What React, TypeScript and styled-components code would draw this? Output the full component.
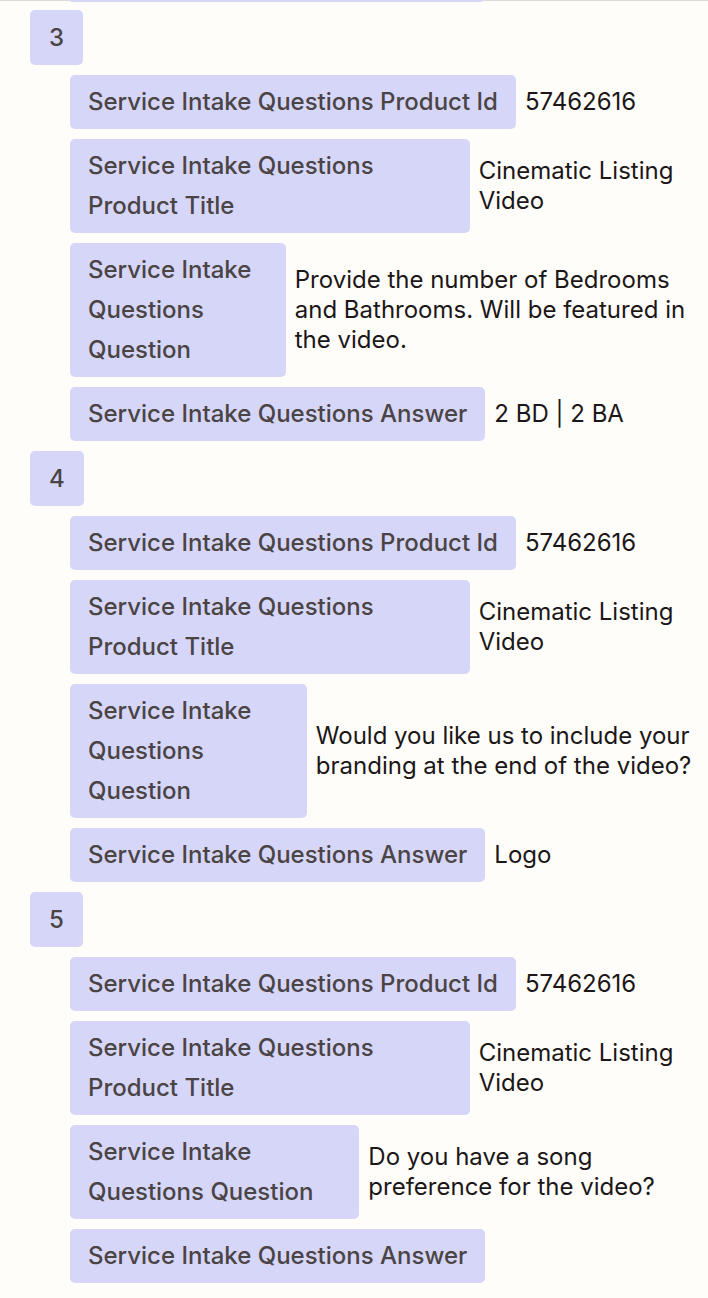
import React from "react";
import styled, { createGlobalStyle } from "styled-components";

const GlobalStyle = createGlobalStyle`
  html, body {
    margin: 0;
    padding: 0;
    background: #fffdf9;
  }
  body {
    font-family: Inter, "Noto Sans", sans-serif;
    -webkit-font-smoothing: antialiased;
  }
`;

const Page = styled.div`
  display: flex;
  flex-direction: column;
  gap: 10px;
  padding: 0 8px 16px 30px;
  border-top: 1px solid #dedcda;
`;

const PrevTail = styled.div`
  margin: -1px 0 -2px 40px;
  width: 413px;
  height: 2px;
  background: #d6d6f9;
  border-radius: 0 0 4px 4px;
`;

const Section = styled.div`
  display: flex;
  flex-direction: column;
  gap: 10px;
`;

const Chip = styled.div`
  background: #d6d6f9;
  color: #4a4445;
  border-radius: 5px;
  padding: 7px 18px;
  font-size: 24px;
  font-weight: 500;
  line-height: 40px;
`;

const Badge = styled(Chip)`
  align-self: flex-start;
  padding: 7.5px 19px;
`;

const Fields = styled.div`
  display: flex;
  flex-direction: column;
  gap: 10px;
  padding-left: 40px;
`;

const Row = styled.div`
  display: flex;
  align-items: center;
  gap: 9px;
`;

const Label = styled(Chip)`
  flex: 0 1 auto;
`;

const Value = styled.div`
  flex: 0 1 auto;
  color: #1b1718;
  font-size: 24px;
  line-height: 30px;
`;

type Item = { n: number; fields: [string, string][] };

const items: Item[] = [
  {
    n: 3,
    fields: [
      ["Service Intake Questions Product Id", "57462616"],
      ["Service Intake Questions Product Title", "Cinematic Listing Video"],
      [
        "Service Intake Questions Question",
        "Provide the number of Bedrooms and Bathrooms. Will be featured in the video.",
      ],
      ["Service Intake Questions Answer", "2 BD | 2 BA"],
    ],
  },
  {
    n: 4,
    fields: [
      ["Service Intake Questions Product Id", "57462616"],
      ["Service Intake Questions Product Title", "Cinematic Listing Video"],
      [
        "Service Intake Questions Question",
        "Would you like us to include your branding at the end of the video?",
      ],
      ["Service Intake Questions Answer", "Logo"],
    ],
  },
  {
    n: 5,
    fields: [
      ["Service Intake Questions Product Id", "57462616"],
      ["Service Intake Questions Product Title", "Cinematic Listing Video"],
      ["Service Intake Questions Question", "Do you have a song preference for the video?"],
      ["Service Intake Questions Answer", ""],
    ],
  },
];

export default function App() {
  return (
    <>
      <GlobalStyle />
      <Page>
        <PrevTail />
        {items.map((item) => (
          <Section key={item.n}>
            <Badge>{item.n}</Badge>
            <Fields>
              {item.fields.map(([label, value]) => (
                <Row key={label}>
                  <Label>{label}</Label>
                  {value && <Value>{value}</Value>}
                </Row>
              ))}
            </Fields>
          </Section>
        ))}
      </Page>
    </>
  );
}
